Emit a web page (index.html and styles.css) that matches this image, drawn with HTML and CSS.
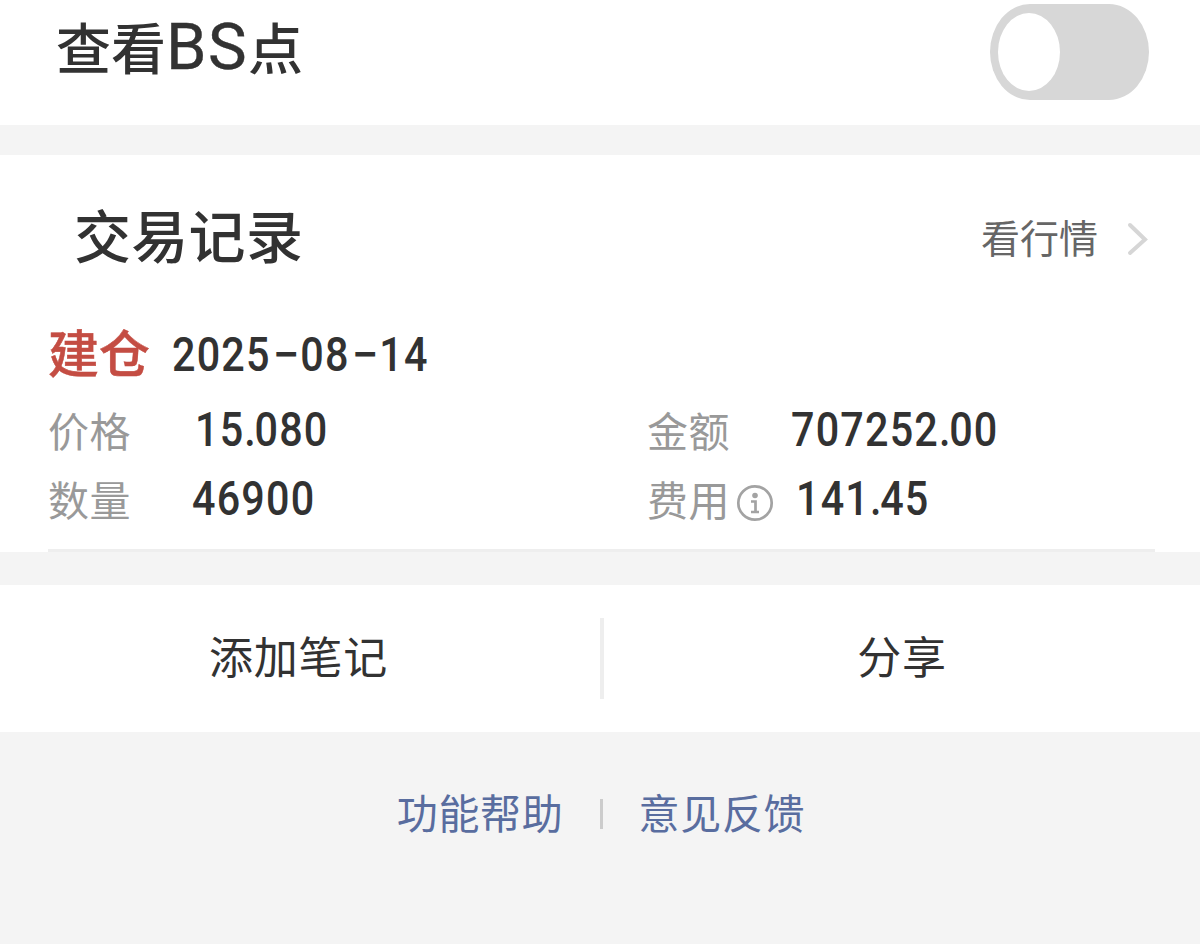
FILE: index.html
```html
<!DOCTYPE html>
<html lang="zh-CN"><head><meta charset="utf-8"><title>交易记录</title><link rel="stylesheet" href="styles.css"></head>
<body>
<section class="setting"><span class="setting-label">查看<span class="latin">BS</span>点</span><span class="switch"><span class="knob"></span></span></section>
<main class="record">
<header class="record-head"><h1>交易记录</h1><a class="quote"><span>看行情</span><svg class="chevron" viewBox="0 0 22 36"><path d="M3 4l15 14.500L3 32"/></svg></a></header>
<div class="trade-title"><strong>建仓</strong><span class="num date">2025<span class="dash">−</span>08<span class="dash">−</span>14</span></div>
<div class="details">
<div class="field"><span class="label">价格</span><span class="num price">15<span class="point">.</span>080</span></div>
<div class="field"><span class="label">金额</span><span class="num amount">707252<span class="point">.</span>00</span></div>
<div class="field"><span class="label">数量</span><span class="num qty">46900</span></div>
<div class="field"><span class="label">费用</span><svg class="info" viewBox="0 0 38 38"><circle cx="19" cy="19" r="16.7"/><path d="M15 17.500h4.500v10M15 28h8"/><circle class="dot" cx="19" cy="11.500" r="2.800"/></svg><span class="num fee">141<span class="point">.</span>45</span></div>
</div>
</main>
<nav class="actions"><a class="note">添加笔记</a><span class="divider"></span><a class="share">分享</a></nav>
<footer class="links"><a>功能帮助</a><span class="link-divider"></span><a>意见反馈</a></footer>
</body></html>
```

FILE: styles.css
```css
* { box-sizing: border-box; }
body { margin: 0; width: 1200px; height: 944px; overflow: hidden; background: #f4f4f4; color: #323232; font-family: "Noto Sans CJK SC", sans-serif; }
.setting { height: 125px; padding: 4px 51px 0 56px; display: flex; justify-content: space-between; background: #fff; }
.setting-label { font-size: 55px; font-weight: 500; line-height: 82px; }
.latin { font-family: Roboto, sans-serif; font-size: 65px; font-weight: 400; line-height: 1; letter-spacing: 1.5px; -webkit-text-stroke: 0.4px #323232; }
.switch { width: 159px; height: 96px; padding: 9px 8px; border-radius: 40px / 48px; background: #d7d7d7; }
.knob { display: block; width: 62px; height: 78px; border-radius: 50%; background: #fff; }
.record { height: 397px; margin-top: 30px; padding: 0 45px 0 48px; background: #fff; }
.record-head { height: 165px; padding: 0 6px 0 26px; display: flex; justify-content: space-between; }
h1 { margin: 0; font-size: 57px; font-weight: 500; line-height: 157px; letter-spacing: .3px; }
.quote { height: 168px; display: flex; align-items: center; font-size: 39px; color: #666; }
.quote span { padding-bottom: 6px; }
.chevron { width: 22px; height: 36px; margin-left: 29px; fill: none; stroke: #d6d6d6; stroke-width: 4; stroke-linecap: round; }
.trade-title { height: 76px; display: flex; }
strong { width: 124px; font-size: 51px; font-weight: 500; line-height: 62px; color: #c44d43; -webkit-text-stroke: 0.5px #c44d43; }
.num { font-family: Roboto, sans-serif; font-size: 48px; font-weight: 500; line-height: 68px; letter-spacing: 1.4px; white-space: nowrap; transform: scaleX(.86); transform-origin: 0 50%; }
.date { line-height: 70px; }
.dash { display: inline-block; width: 34.5px; text-align: center; letter-spacing: 0; transform: scaleX(1.15); }
.point { letter-spacing: -1.5px; }
.details { height: 156px; display: grid; grid-template-columns: 599px 1fr; grid-template-rows: 69px 69px; border-bottom: 3px solid #eee; }
.field { display: flex; }
.label { width: 83px; font-size: 41px; letter-spacing: .5px; line-height: 66px; color: #999; white-space: nowrap; }
.price { margin-left: 64px; }
.amount { margin-left: 61px; }
.qty { margin-left: 61px; }
.info { width: 38px; height: 38px; margin: 19px 0 0 6px; fill: none; stroke: #a3a3a3; stroke-width: 2.7; }
.info .dot { fill: #a3a3a3; stroke: none; }
.fee { margin-left: 22px; }
.actions { height: 147px; margin-top: 33px; display: flex; align-items: center; background: #fff; font-size: 44px; letter-spacing: .7px; }
.note, .share { text-align: center; padding-bottom: 8px; }
.note { width: 600px; padding-right: 3px; }
.share { width: 596px; }
.divider { width: 4px; height: 81px; background: #eee; }
.links { height: 162px; padding-left: 2px; display: flex; justify-content: center; align-items: center; gap: 36px; font-size: 41px; letter-spacing: .7px; color: #596d9f; }
.links a { padding-bottom: 4px; }
.link-divider { width: 3px; height: 30px; margin-top: 1px; background: #ccc; }
```
